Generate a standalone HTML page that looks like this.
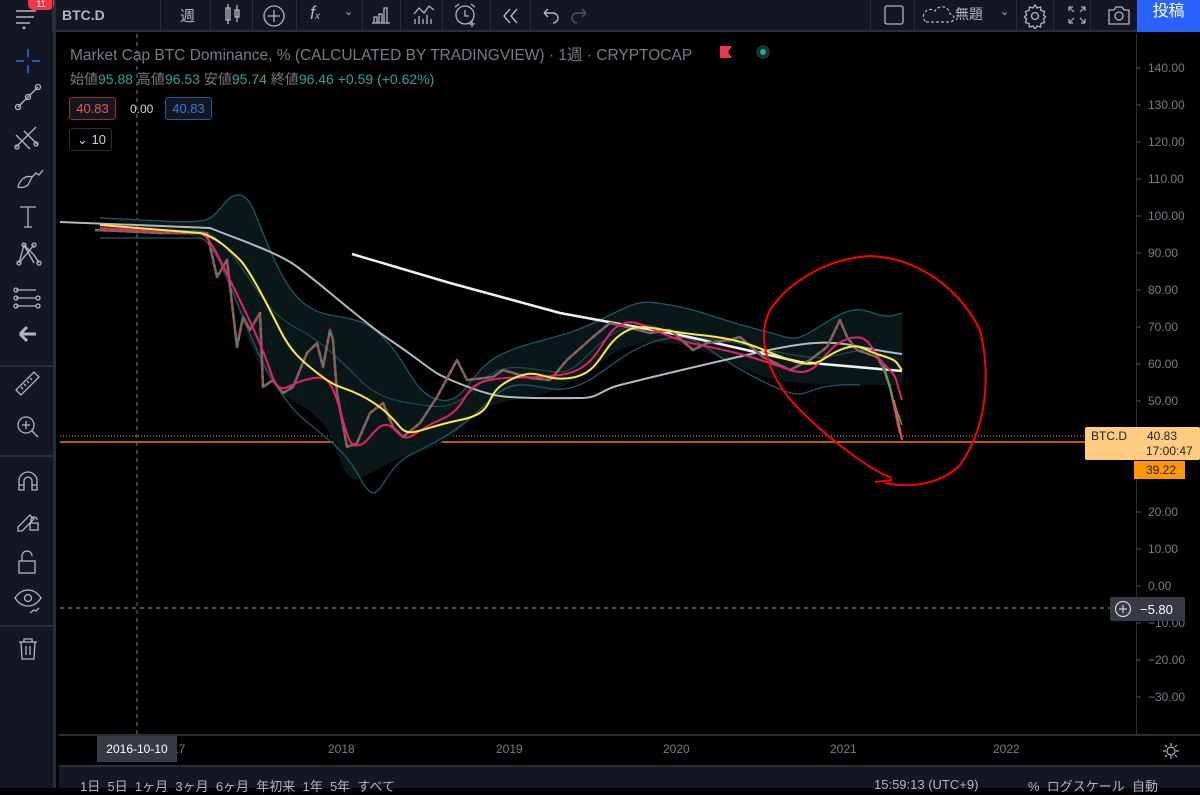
<!DOCTYPE html><html><head><meta charset="utf-8"><style>
*{margin:0;padding:0;box-sizing:border-box}
body{width:1200px;height:788px;background:#000;overflow:hidden;position:relative;font-family:"Liberation Sans","Noto Sans CJK JP",sans-serif;color:#b2b5be}
.top{position:absolute;left:0;top:0;width:1200px;height:32px;background:#131722;border-bottom:2px solid #2a2e39}
.left{position:absolute;left:0;top:0;width:56px;height:788px;background:#131722;border-right:3px solid #2a2e39}
.t{position:absolute;font-size:14px;white-space:nowrap}
.sep{position:absolute;top:0;width:1px;height:32px;background:#2a2e39}
.ax{position:absolute;left:1148px;font-size:12px;color:#787b86}
.yr{position:absolute;top:742px;font-size:12px;color:#787b86}
svg{position:absolute}
</style></head><body>
<div class="top"></div>
<div class="left"></div>
<svg style="left:14px;top:5px" width="30" height="24"><g stroke="#b2b5be" stroke-width="1.5"><line x1="2" y1="6" x2="22" y2="6"/><line x1="2" y1="12" x2="20" y2="12"/><line x1="2" y1="18" x2="16" y2="18"/></g><circle cx="10" cy="23" r="1.5" fill="#b2b5be"/></svg>
<div style="position:absolute;left:28px;top:0;width:26px;height:10px;background:#f23645;border-radius:0 0 6px 6px;font-size:9px;color:#fff;text-align:center;line-height:8px">11</div>
<div class="t" style="left:62px;top:7px;font-weight:bold;color:#b2b5be">BTC.D</div>
<div class="sep" style="left:52px"></div><div class="sep" style="left:160px"></div><div class="sep" style="left:210px"></div><div class="sep" style="left:252px"></div><div class="sep" style="left:296px"></div><div class="sep" style="left:362px"></div><div class="sep" style="left:400px"></div><div class="sep" style="left:442px"></div><div class="sep" style="left:490px"></div><div class="sep" style="left:530px"></div>
<div class="t" style="left:180px;top:5px;font-size:15px">週</div>
<svg style="left:222px;top:2px" width="22" height="26" fill="none" stroke="#b2b5be" stroke-width="1.3"><rect x="4" y="6" width="4" height="12"/><line x1="6" y1="2" x2="6" y2="22"/><rect x="13" y="8" width="4" height="7"/><line x1="15" y1="3" x2="15" y2="20"/></svg>
<svg style="left:262px;top:4px" width="24" height="24" fill="none" stroke="#b2b5be" stroke-width="1.3"><circle cx="12" cy="12" r="10"/><path d="M12 6v12M6 12h12"/></svg>
<div class="t" style="left:310px;top:3px;font-size:18px;font-style:italic">f<span style="font-size:10px">x</span></div>
<div class="t" style="left:344px;top:5px;font-size:11px">⌄</div>
<svg style="left:370px;top:5px" width="22" height="20" fill="none" stroke="#b2b5be" stroke-width="1.3"><path d="M2 18h18M4 18v-6h3v6M9 18v-9h3v9M14 18V3h3v15"/></svg>
<svg style="left:412px;top:2px" width="24" height="24" fill="none" stroke="#b2b5be" stroke-width="1.3"><path d="M2 12l5-6 5 5 5-7 5 4M3 22v-5M7 22v-8M11 22v-5M15 22v-9M19 22v-5"/></svg>
<svg style="left:452px;top:1px" width="28" height="28" fill="none" stroke="#b2b5be" stroke-width="1.3"><circle cx="13" cy="14" r="9"/><path d="M13 9v6h4M3 6l4-3M23 6l-4-3M20 20v6M17 23h6"/></svg>
<svg style="left:500px;top:6px" width="22" height="20" fill="none" stroke="#b2b5be" stroke-width="1.4"><path d="M10 3L4 10l6 7M17 3l-6 7 6 7"/></svg>
<svg style="left:540px;top:5px" width="20" height="20" fill="none" stroke="#b2b5be" stroke-width="1.4"><path d="M4 8h9a5 5 0 0 1 0 10M4 8l4-4M4 8l4 4"/></svg>
<svg style="left:570px;top:5px" width="20" height="20" fill="none" stroke="#50535e" stroke-width="1.4"><path d="M16 8H7a5 5 0 0 0 0 10M16 8l-4-4M16 8l-4 4"/></svg>
<div class="sep" style="left:870px"></div><div class="sep" style="left:914px"></div><div class="sep" style="left:1016px"></div><div class="sep" style="left:1053px"></div><div class="sep" style="left:1090px"></div>
<svg style="left:882px;top:3px" width="24" height="24" fill="none" stroke="#b2b5be" stroke-width="1.3"><rect x="3" y="3" width="18" height="18" rx="2"/></svg>
<svg style="left:922px;top:5px" width="34" height="20" fill="none" stroke="#b2b5be" stroke-width="1.2" stroke-dasharray="3 2"><path d="M4 17h24a4 4 0 0 0 0-8 8 8 0 0 0-15-3 6 6 0 0 0-9 11z"/></svg>
<div class="t" style="left:955px;top:4px;font-size:14px">無題</div>
<div class="t" style="left:1000px;top:5px;font-size:11px">⌄</div>
<svg style="left:1022px;top:3px" width="26" height="26" fill="none" stroke="#b2b5be" stroke-width="1.3"><circle cx="13" cy="13" r="3.5"/><path d="M13 2l2 3 3.5-1 .5 3.5 3.5 1-1 3.5 2 2-2 2 1 3.5-3.5 1-.5 3.5-3.5-1-2 3-2-3-3.5 1-.5-3.5-3.5-1 1-3.5-2-2 2-2-1-3.5 3.5-1 .5-3.5 3.5 1z"/></svg>
<svg style="left:1066px;top:4px" width="22" height="22" fill="none" stroke="#b2b5be" stroke-width="1.2"><path d="M3 3l5 5M3 3v4M3 3h4M19 3l-5 5M19 3v4M19 3h-4M3 19l5-5M3 19v-4M3 19h4M19 19l-5-5M19 19v-4M19 19h-4"/></svg>
<svg style="left:1106px;top:3px" width="26" height="24" fill="none" stroke="#b2b5be" stroke-width="1.3"><path d="M3 7h5l2-3h6l2 3h5v14H3z"/><circle cx="13" cy="13" r="4"/></svg>
<div style="position:absolute;left:1137px;top:0;width:63px;height:32px;background:#2962ff;color:#fff;font-size:16px;text-align:center;line-height:24px">投稿</div>

<svg style="left:0;top:35px" width="56" height="640" fill="none" stroke="#b2b5be" stroke-width="1.3">
<g stroke="#2962ff" stroke-width="1.6"><path d="M28 14v8M28 30v8M16 26h8M32 26h8"/></g>
<path d="M18 72l20-20"/><circle cx="18" cy="72" r="2.5"/><circle cx="28" cy="62" r="2.5"/><circle cx="38" cy="52" r="2.5"/>
<path d="M16 112l20-20M16 100l14 14M24 96l14 14"/><circle cx="17" cy="112" r="2"/><circle cx="36" cy="109" r="2"/>
<path d="M18 152c2-8 8-12 14-10l-4 8c-4 3-7 3-10 2zM32 142l4-4 3 2 4-5"/>
<path d="M20 172h16M28 172v20M24 192h8"/>
<path d="M19 228l5-18 10 10 5 8M19 228l15-18M24 210l10 18"/><circle cx="19" cy="228" r="2"/><circle cx="24" cy="210" r="2"/><circle cx="34" cy="210" r="2"/><circle cx="39" cy="228" r="2"/>
<path d="M16 255h20M16 263h20M16 271h20"/><circle cx="16" cy="255" r="2"/><circle cx="16" cy="263" r="2"/><circle cx="16" cy="271" r="2"/><circle cx="38" cy="263" r="2"/><circle cx="38" cy="271" r="2"/>
<path d="M20 299h16M20 299l7-7M20 299l7 7" stroke-width="3" stroke="#b2b5be"/>
<path d="M16 355l18-18 5 5-18 18zM21 352l2 2M24 349l2 2M27 346l2 2M30 343l2 2"/>
<circle cx="26" cy="390" r="8"/><path d="M32 396l6 6M26 386v8M22 390h8"/>
<path d="M19 455v-9a9 9 0 0 1 18 0v9h-5v-9a4 4 0 0 0-8 0v9zM19 450h5M32 450h5"/>
<path d="M18 492l12-12 4 4-12 12h-4zM30 488h8v7h-8zM31 488v-3a3 3 0 0 1 6 0"/>
<rect x="19" y="526" width="16" height="12"/><path d="M22 526v-5a5 5 0 0 1 10 0"/>
<path d="M15 563c4-6 9-8 13-8s9 2 13 8c-4 6-9 8-13 8s-9-2-13-8z"/><circle cx="28" cy="563" r="3.5"/><path d="M30 578l4-3 2 1 3-3"/>
<path d="M19 607h18M24 607v-3h8v3M21 607l1 17h12l1-17M26 611v9M30 611v9"/>
</svg>
<div style="position:absolute;left:0;top:455px;width:56px;height:2px;background:#2a2e39"></div>
<div style="position:absolute;left:0;top:365px;width:56px;height:2px;background:#2a2e39"></div>
<div style="position:absolute;left:0;top:625px;width:56px;height:2px;background:#2a2e39"></div>

<div style="position:absolute;left:1136px;top:34px;width:1px;height:700px;background:#2a2e39"></div>
<div style="position:absolute;left:59px;top:734px;width:1141px;height:2px;background:#2a2e39"></div>
<div style="position:absolute;left:59px;top:765px;width:1141px;height:23px;background:#131722;border-top:2px solid #2a2e39"></div>
<svg style="left:1136px;top:0" width="8" height="740" stroke="#50535e"><path d="M0 68h5M0 105h5M0 142h5M0 179h5M0 216h5M0 253h5M0 290h5M0 327h5M0 364h5M0 401h5M0 438h5M0 475h5M0 512h5M0 549h5M0 586h5M0 623h5M0 660h5M0 697h5"/></svg>
<div class="ax" style="top:61px">140.00</div><div class="ax" style="top:98px">130.00</div><div class="ax" style="top:135px">120.00</div><div class="ax" style="top:172px">110.00</div><div class="ax" style="top:209px">100.00</div><div class="ax" style="top:246px">90.00</div><div class="ax" style="top:283px">80.00</div><div class="ax" style="top:320px">70.00</div><div class="ax" style="top:357px">60.00</div><div class="ax" style="top:394px">50.00</div><div class="ax" style="top:505px">20.00</div><div class="ax" style="top:542px">10.00</div><div class="ax" style="top:579px">0.00</div><div class="ax" style="top:616px">−10.00</div><div class="ax" style="top:653px">−20.00</div><div class="ax" style="top:690px">−30.00</div>

<div class="yr" style="left:328px">2018</div><div class="yr" style="left:496px">2019</div><div class="yr" style="left:663px">2020</div><div class="yr" style="left:830px">2021</div><div class="yr" style="left:993px">2022</div>
<div class="yr" style="left:172px">17</div>
<div style="position:absolute;left:97px;top:736px;width:80px;height:26px;background:#363a45;color:#fff;font-size:12px;text-align:center;line-height:26px">2016-10-10</div>
<svg style="left:1162px;top:742px" width="18" height="18" fill="none" stroke="#b2b5be" stroke-width="1.2"><circle cx="9" cy="9" r="4"/><path d="M9 1v3M9 14v3M1 9h3M14 9h3M3 3l2 2M13 13l2 2M3 15l2-2M13 5l2-2"/></svg>
<div class="t" style="left:80px;top:776px;font-size:13px">1日 &nbsp;5日 &nbsp;1ヶ月 &nbsp;3ヶ月 &nbsp;6ヶ月 &nbsp;年初来 &nbsp;1年 &nbsp;5年 &nbsp;すべて</div>
<div class="t" style="left:874px;top:777px;font-size:13px">15:59:13 (UTC+9)</div>
<div class="t" style="left:1028px;top:776px;font-size:13px">% &nbsp;ログスケール &nbsp;自動</div>

<svg style="left:60px;top:34px" width="1076" height="700" viewBox="60 34 1076 700" fill="none" stroke-linejoin="round">
<line x1="137" y1="34" x2="137" y2="734" stroke="#787b86" stroke-dasharray="4 4"/>
<line x1="60" y1="608" x2="1136" y2="608" stroke="#9598a1" stroke-dasharray="4 4"/>
<line x1="60" y1="436" x2="1136" y2="436" stroke="#f7a600" stroke-dasharray="1 2"/>
<line x1="60" y1="442" x2="1136" y2="442" stroke="#f57c00" stroke-width="1.5"/>
<path d="M100 218C150 220 190 224 205 220S225 195 238 195 255 215 270 250 300 310 330 315 370 322 390 345 415 395 440 400 470 370 500 355 560 340 600 320 640 300 670 305 720 320 760 330 790 345 830 320 870 325 902 313L902 385C860 385 820 385 790 382 760 380 730 360 700 350S640 340 620 350 570 388 540 395 490 400 470 420 430 450 410 455 380 470 360 478 340 440 320 420 290 405 270 380 240 310 220 260 210 240 200 238Z" fill="#0a1718"/>
<path d="M100 218C150 220 190 224 205 220S225 195 238 195 255 215 270 250 300 310 330 315 370 322 390 345 415 395 440 400 470 370 500 355 560 340 600 320 640 300 670 305 720 320 760 330 790 345 830 320 870 325 902 313" stroke="#1e5868" stroke-width="1.3"/>
<path d="M100 238L200 238C210 240 220 260 240 310S270 380 290 405 340 440 360 478 380 470 410 455 460 430 490 400 540 395 570 388 620 350 660 340 700 350 760 380 790 382 860 385 902 385" stroke="#1e5868" stroke-width="1.3"/>
<path d="M100 228L200 231C215 232 230 250 250 280S280 320 300 330 340 360 360 380 400 402 430 406 470 390 490 375 540 372 560 372 590 345 620 330 660 335 700 338 760 350 800 356 840 348 880 350 902 355" stroke="#1a4c4c" stroke-width="1.2"/>
<path d="M60 222L210 228C240 240 270 250 290 262S360 320 390 340 430 370 440 375 480 393 500 396 560 398 580 398 600 390 620 385 680 370 760 352 840 346 902 354" stroke="#b7b7c2" stroke-width="2"/>
<path d="M352 254L450 283 560 313 680 335 800 362 902 371" stroke="#f0f0f0" stroke-width="2.5"/>
<path d="M95 230L120 231 140 232 160 233 180 233 207 233 217 277 227 260 237 347 243 317 250 330 260 313 263 387 273 380 283 393 293 387 307 353 317 343 323 367 330 330 333 340 337 393 347 447 357 443 370 413 383 403 393 427 403 437 420 423 437 397 457 360 467 380 493 377 503 370 530 378 550 380 567 360 593 337 610 323 627 327 650 333 670 330 693 350 707 343 730 340 740 337 763 357 790 370 810 360 827 347 840 320 847 337 857 350 877 357 883 367 890 387 900 433" stroke="#b8454a" stroke-width="2.5"/>
<path d="M95 230L120 231 140 232 160 233 180 233 207 233 217 277 227 260 237 347 243 317 250 330 260 313 263 387 273 380 283 393 293 387 307 353 317 343 323 367 330 330 333 340 337 393 347 447 357 443 370 413 383 403 393 427 403 437 420 423 437 397 457 360 467 380 493 377 503 370 530 378 550 380 567 360 593 337 610 323 627 327 650 333 670 330 693 350 707 343 730 340 740 337 763 357 790 370 810 360 827 347 840 320 847 337 857 350 877 357 883 367 890 387 900 433" stroke="#22958a" stroke-width="2.5" stroke-dasharray="3 5"/>
<path d="M100 228L200 233C210 236 220 260 230 280S260 340 270 370 285 385 305 380 330 375 340 410 350 447 360 445 380 413 395 430 410 432 440 420 460 385 490 380 520 380 560 375 600 335 620 325 650 335 700 345 760 360 790 370 820 350 845 340 870 350 885 365 895 380 902 400" stroke="#e91e63" stroke-width="2"/>
<path d="M100 225L200 233C215 236 230 250 240 260S270 310 280 330 300 360 320 375 340 385 360 395 390 415 400 427 420 428 460 420 480 395 510 380 540 382 570 378 600 350 620 335 650 330 700 335 760 350 790 360 820 358 840 350 860 349 880 355 895 362 902 370" stroke="#ffeb3b" stroke-width="2"/>
<path d="M884 365L893 400 902 425" stroke="#4caf50" stroke-width="1.5"/>
<path d="M894 400L902 440" stroke="#ef5350" stroke-width="2"/>
<path d="M892 478C870 470 830 440 800 410 770 380 755 340 770 310 790 280 830 258 870 256 920 258 960 290 980 330 992 380 985 430 960 465 940 485 910 488 885 483" stroke="#ff0000" stroke-width="2"/>
<path d="M875 482L892 480" stroke="#ff0000" stroke-width="2"/>
</svg>

<div class="t" style="left:70px;top:43px;font-size:15.5px;color:#787b86">Market Cap BTC Dominance, % (CALCULATED BY TRADINGVIEW) · 1週 · CRYPTOCAP</div>
<svg style="left:718px;top:45px" width="16" height="14"><path d="M2 1h12l-4 6 4 6H2z" fill="#f23645"/></svg>
<div style="position:absolute;left:756px;top:45px;width:14px;height:14px;border-radius:7px;background:#10332e"></div>
<div style="position:absolute;left:760px;top:49px;width:6px;height:6px;border-radius:3px;background:#26a69a"></div>
<div class="t" style="left:70px;top:69px;font-size:14px;color:#787b86">始値<span style="color:#26a69a">95.88</span> 高値<span style="color:#26a69a">96.53</span> 安値<span style="color:#26a69a">95.74</span> 終値<span style="color:#26a69a">96.46</span> <span style="color:#26a69a">+0.59 (+0.62%)</span></div>
<div style="position:absolute;left:69px;top:97px;width:47px;height:23px;border:1px solid #a12a30;border-radius:3px;color:#ef5350;font-size:13px;text-align:center;line-height:21px;background:#131722">40.83</div>
<div class="t" style="left:130px;top:102px;font-size:12px;color:#d1d4dc">0.00</div>
<div style="position:absolute;left:165px;top:97px;width:47px;height:23px;border:1px solid #1e5aa8;border-radius:3px;color:#2e7bd9;font-size:13px;text-align:center;line-height:21px;background:#131722">40.83</div>
<div style="position:absolute;left:69px;top:128px;width:43px;height:23px;border:1px solid #2a2e39;border-radius:3px;color:#d1d4dc;font-size:13px;line-height:21px;padding-left:7px">⌄ 10</div>

<div style="position:absolute;left:1085px;top:427px;width:115px;height:33px;background:#ffcc80;border-radius:2px"></div>
<div class="t" style="left:1091px;top:429px;font-size:12px;color:#222">BTC.D</div>
<div class="t" style="left:1147px;top:429px;font-size:12px;color:#222">40.83</div>
<div class="t" style="left:1146px;top:444px;font-size:12px;color:#222">17:00:47</div>
<div style="position:absolute;left:1134px;top:461px;width:51px;height:18px;background:#ff9800;color:#222;font-size:12px;line-height:18px;padding-left:12px">39.22</div>
<div style="position:absolute;left:1110px;top:597px;width:75px;height:24px;background:#363a45;border-radius:2px"></div>
<svg style="left:1114px;top:600px" width="18" height="18" fill="none" stroke="#d1d4dc" stroke-width="1.2"><circle cx="9" cy="9" r="7.5"/><path d="M9 5v8M5 9h8"/></svg>
<div class="t" style="left:1140px;top:602px;font-size:13px;color:#fff">−5.80</div>
</body></html>
